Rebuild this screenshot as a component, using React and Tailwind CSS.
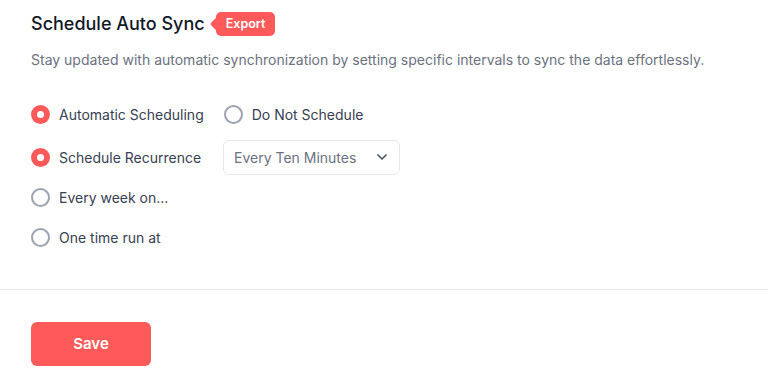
import { ChevronDown } from "lucide-react";

function Radio({ checked, label }) {
  return (
    <label className="flex items-center gap-[9px] cursor-pointer">
      {checked ? (
        <span className="w-[19px] h-[19px] rounded-full bg-[#ff5a5a] flex items-center justify-center">
          <span className="w-[7px] h-[7px] rounded-full bg-white" />
        </span>
      ) : (
        <span className="w-[19px] h-[19px] rounded-full border-2 border-[#9ca3af] bg-white" />
      )}
      <span className="text-[14px] text-[#374151]">{label}</span>
    </label>
  );
}

export default function App() {
  return (
    <div className="w-[768px] h-[374px] bg-white overflow-hidden" style={{ fontFamily: "Inter, 'Noto Sans', sans-serif" }}>
      <div className="px-[31px] pt-[12px]">
        <div className="flex items-center">
          <h2 className="text-[18px] font-medium text-[#111827] leading-[24px]">Schedule Auto Sync</h2>
          <div className="relative ml-[11px] flex items-center">
            <span className="absolute -left-[4px] w-[10px] h-[10px] bg-[#ff5a5a] rotate-45 rounded-[2px]" />
            <span className="relative bg-[#ff5a5a] text-white text-[12.5px] font-semibold rounded-[5px] px-[10px] h-[24px] flex items-center">
              Export
            </span>
          </div>
        </div>
        <p className="mt-[14px] text-[14px] text-[#6b7280] leading-[20px]">
          Stay updated with automatic synchronization by setting specific intervals to sync the data effortlessly.
        </p>

        <div className="mt-[33px] flex flex-col">
          <div className="flex items-center gap-[20px] h-[22px]">
            <Radio checked label="Automatic Scheduling" />
            <Radio label="Do Not Schedule" />
          </div>
          <div className="mt-[15px] flex items-center h-[34px]">
            <div className="w-[192px]">
              <Radio checked label="Schedule Recurrence" />
            </div>
            <div className="w-[177px] h-[35px] border border-[#e5e7eb] rounded-[6px] flex items-center justify-between pl-[10px] pr-[9px] text-[14px] text-[#6b7280]">
              <span>Every Ten Minutes</span>
              <ChevronDown size={16} strokeWidth={2.5} className="text-[#4b5563]" />
            </div>
          </div>
          <div className="mt-[12px] h-[22px] flex items-center">
            <Radio label="Every week on..." />
          </div>
          <div className="mt-[18px] h-[22px] flex items-center">
            <Radio label="One time run at" />
          </div>
        </div>
      </div>

      <div className="mt-[41px] border-t border-[#e5e7eb]" />

      <div className="px-[31px] pt-[32px]">
        <button className="w-[120px] h-[44px] rounded-[6px] bg-[#ff5a5a] text-white text-[15px] font-semibold">
          Save
        </button>
      </div>
    </div>
  );
}
